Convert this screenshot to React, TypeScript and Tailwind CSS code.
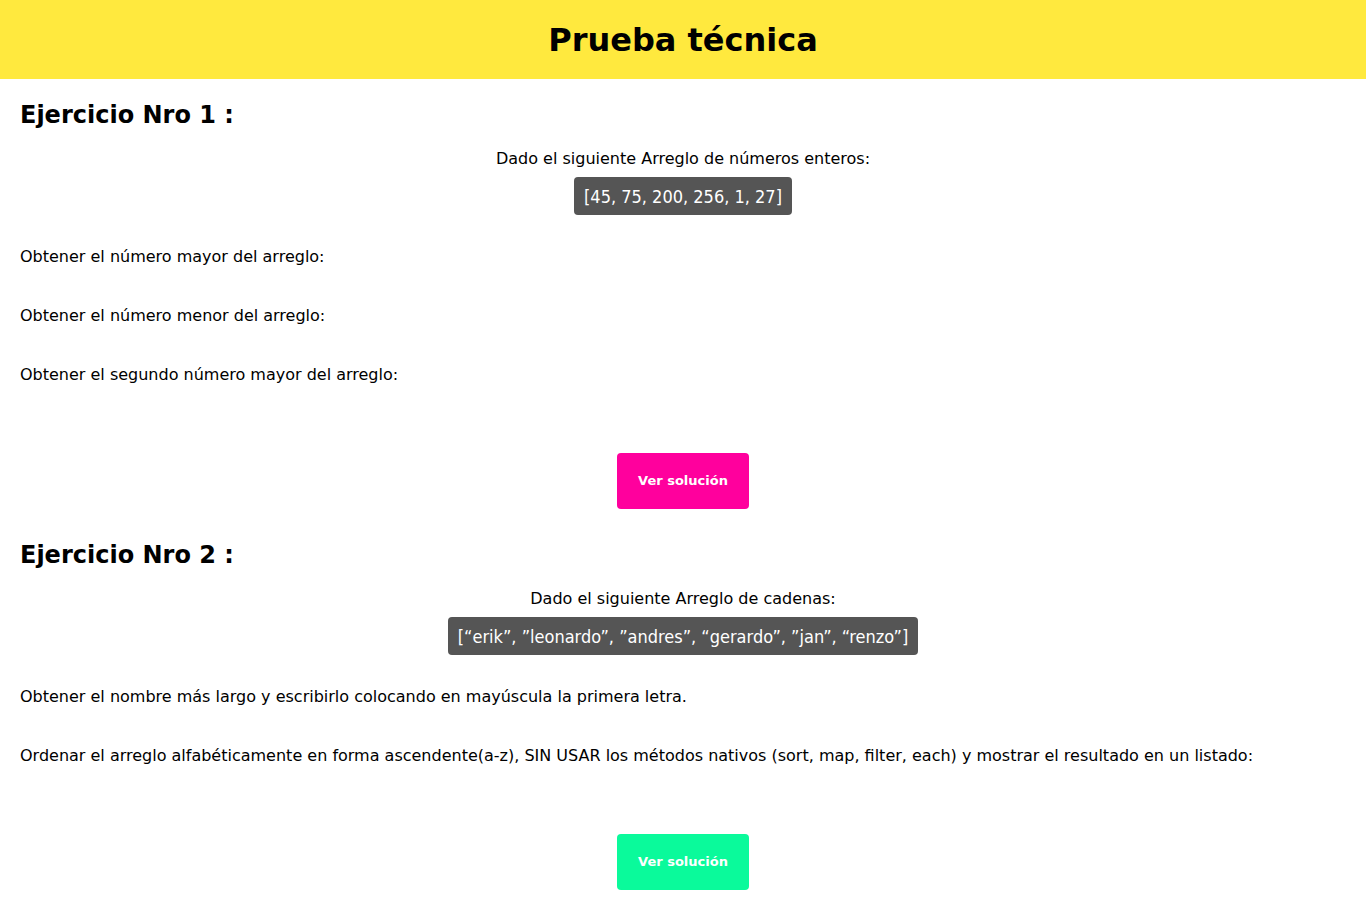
import React from "react";

const font = { fontFamily: '"DejaVu Sans", Verdana, sans-serif' };
const condensed = { fontFamily: '"DejaVu Sans Condensed", "DejaVu Sans", sans-serif' };

function Section({
  title,
  intro,
  array,
  tasks,
  btnClass,
}: {
  title: string;
  intro: string;
  array: string;
  tasks: string[];
  btnClass: string;
}) {
  return (
    <section className="px-5">
      <h2 className="text-[24px] font-bold leading-[30px] h-[30px] text-black">{title}</h2>
      <p className="mt-[19px] text-center text-[16px] leading-[20px] text-black">{intro}</p>
      <div className="mt-[8px] flex justify-center">
        <span
          style={condensed}
          className="rounded-[4px] bg-[#555555] px-[10px] h-[38px] flex items-center text-[18px] text-white"
        >
          {array}
        </span>
      </div>
      <div className="mt-[32px] flex flex-col gap-[39px]">
        {tasks.map((t) => (
          <p key={t} className="text-[16px] leading-[20px] text-black">
            {t}
          </p>
        ))}
      </div>
      <div className="mt-[68px] flex justify-center">
        <button
          className={`w-[132px] h-[56px] rounded-[4px] text-white text-[13px] font-bold ${btnClass}`}
        >
          Ver solución
        </button>
      </div>
    </section>
  );
}

export default function App() {
  return (
    <div style={font} className="min-h-[900px] bg-white">
      <header className="h-[79px] bg-[#ffe93e] flex items-center justify-center">
        <h1 className="text-[32px] font-bold text-black">Prueba técnica</h1>
      </header>
      <div className="pt-[21px]">
        <Section
          title="Ejercicio Nro 1 :"
          intro="Dado el siguiente Arreglo de números enteros:"
          array="[45, 75, 200, 256, 1, 27]"
          tasks={[
            "Obtener el número mayor del arreglo:",
            "Obtener el número menor del arreglo:",
            "Obtener el segundo número mayor del arreglo:",
          ]}
          btnClass="bg-[#ff009d]"
        />
        <div className="mt-[31px]">
          <Section
            title="Ejercicio Nro 2 :"
            intro="Dado el siguiente Arreglo de cadenas:"
            array="[“erik”, ”leonardo”, ”andres”, “gerardo”, ”jan”, “renzo”]"
            tasks={[
              "Obtener el nombre más largo y escribirlo colocando en mayúscula la primera letra.",
              "Ordenar el arreglo alfabéticamente en forma ascendente(a-z), SIN USAR los métodos nativos (sort, map, filter, each) y mostrar el resultado en un listado:",
            ]}
            btnClass="bg-[#0afa9b]"
          />
        </div>
      </div>
    </div>
  );
}
